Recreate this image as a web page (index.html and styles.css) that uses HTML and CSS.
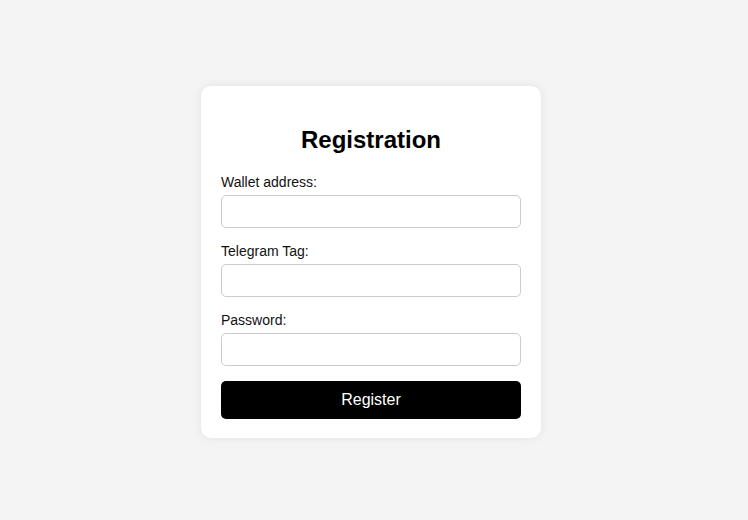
FILE: index.html
```html
<!DOCTYPE html>
<html>
<head>
<meta charset="utf-8">
<link rel="stylesheet" href="styles.css">
</head>
<body>
<div class="page">
  <form class="card">
    <h2 class="title">Registration</h2>
    <label class="label">Wallet address:</label>
    <input class="input" type="text">
    <label class="label">Telegram Tag:</label>
    <input class="input" type="text">
    <label class="label">Password:</label>
    <input class="input" type="password">
    <button class="btn" type="button">Register</button>
  </form>
</div>
</body>
</html>
```
FILE: styles.css
```css
html, body {
  margin: 0;
  padding: 0;
  background: #f4f4f4;
  font-family: "Liberation Sans", Arial, sans-serif;
}
.page {
  height: 520px;
  display: flex;
  align-items: center;
  justify-content: center;
}
.card {
  width: 300px;
  padding: 20px 20px 19px;
  background: #fff;
  border-radius: 10px;
  box-shadow: 0 0 10px rgba(0,0,0,0.08);
  display: flex;
  flex-direction: column;
  margin: 4px 6px 0 0;
}
.title {
  margin: 20px 0 20px;
  font-size: 24px;
  line-height: 28px;
  text-align: center;
  color: #000;
}
.label {
  font-size: 14px;
  line-height: 16px;
  color: #111;
  margin-bottom: 5px;
}
.input {
  box-sizing: border-box;
  height: 33px;
  width: 100%;
  border: 1px solid #ccc;
  border-radius: 5px;
  margin: 0 0 15px;
  padding: 0 8px;
  font-size: 14px;
  background: #fff;
}
.btn {
  height: 38px;
  border: none;
  border-radius: 5px;
  background: #000;
  color: #fff;
  font-family: "Liberation Sans", Arial, sans-serif;
  font-size: 16px;
  cursor: pointer;
}
```
